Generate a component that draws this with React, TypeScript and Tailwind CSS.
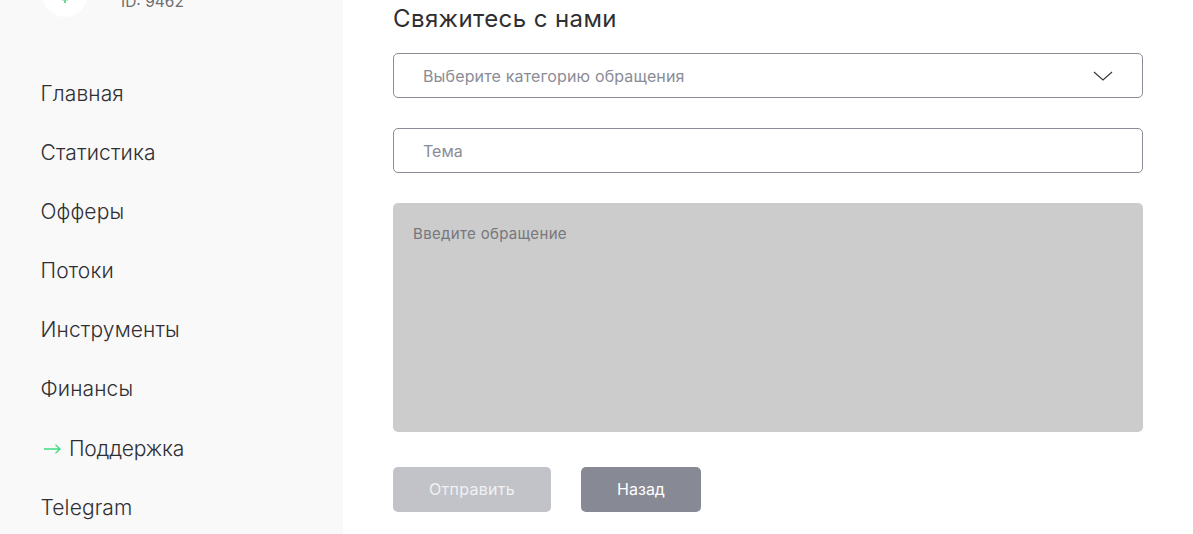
import React from 'react';

const navItems = ['Главная', 'Статистика', 'Офферы', 'Потоки', 'Инструменты', 'Финансы', 'Поддержка', 'Telegram'];

const Sidebar: React.FC = () => (
  <aside className="w-[343px] shrink-0 bg-[#f9f9f9] pl-[40.5px]">
    {/* profile block, page is scrolled so it is cut off at the top */}
    <div className="-mt-[29px] flex h-[46px] items-start gap-[33px]">
      <div className="ml-[1.5px] flex h-[46px] w-[46px] items-end justify-center rounded-full bg-white pb-[14px]">
        <svg width="10" height="4" viewBox="0 0 10 4" fill="none">
          <path d="M5 0V4M3 0V1.5M7 0V1.5" stroke="#22c55e" strokeWidth="1.3" />
        </svg>
      </div>
      <div className="pt-[21px] text-[15.5px] leading-[20px] text-[#6f6f6f]">ID: 9462</div>
    </div>
    <nav className="mt-[62px] flex flex-col gap-[29px]">
      {navItems.map((item) => (
        <a
          key={item}
          className={
            item === 'Поддержка'
              ? 'mt-px flex h-[30px] items-center text-[21px] leading-[30px] font-light tracking-[-0.2px] text-[#2f2f33]'
              : 'flex h-[30px] items-center text-[21px] leading-[30px] font-light tracking-[0.12px] text-[#2f2f33]'
          }
        >
          {item === 'Поддержка' && (
            <svg className="ml-[3.5px] mr-[8px]" width="17" height="10" viewBox="0 0 17 10" fill="none">
              <path d="M0 5H16M11.5 0.8L16 5L11.5 9.2" stroke="#3ddc84" strokeWidth="1.3" />
            </svg>
          )}
          {item}
        </a>
      ))}
    </nav>
  </aside>
);

const ContactForm: React.FC = () => (
  <main className="w-[750px] ml-[50px] flex flex-col">
    <h1 className="mt-[3px] h-[32px] text-[24px] leading-[32px] font-normal tracking-[0.4px] text-[#2f2f33]">Свяжитесь с нами</h1>
    <div className="mt-[18px] flex h-[45px] items-center justify-between rounded-[5px] border border-[#8a8c96] bg-white pl-[29px] pr-[29px]">
      <span className="text-[16px] tracking-[0.15px] text-[#8a8c96]">Выберите категорию обращения</span>
      <svg width="20" height="10" viewBox="0 0 20 10" fill="none">
        <path d="M1 1L10 9L19 1" stroke="#3a3a3e" strokeWidth="1.2" />
      </svg>
    </div>
    <input
      placeholder="Тема"
      className="mt-[30px] h-[45px] rounded-[5px] border border-[#8a8c96] bg-white pl-[29px] text-[16px] outline-none placeholder:text-[#8a8c96]"
    />
    <textarea
      placeholder="Введите обращение"
      className="mt-[30px] h-[229px] resize-none rounded-[5px] bg-[#cccccc] px-[20px] pt-[21px] text-[15px] leading-[20px] tracking-[0.33px] outline-none placeholder:text-[#77777c]"
    />
    <div className="mt-[35px] flex gap-[30px]">
      <button className="h-[45px] w-[158px] rounded-[5px] bg-[#c2c3c8] pb-px text-[16px] tracking-[0.3px] text-[#f1f1f3]">Отправить</button>
      <button className="h-[45px] w-[120px] rounded-[5px] bg-[#878a94] pb-px text-[16px] text-white">Назад</button>
    </div>
  </main>
);

const App: React.FC = () => (
  <div className="flex h-[534px] w-full overflow-hidden bg-white font-['Inter',_'Noto_Sans',_sans-serif]">
    <Sidebar />
    <ContactForm />
  </div>
);

export default App;
